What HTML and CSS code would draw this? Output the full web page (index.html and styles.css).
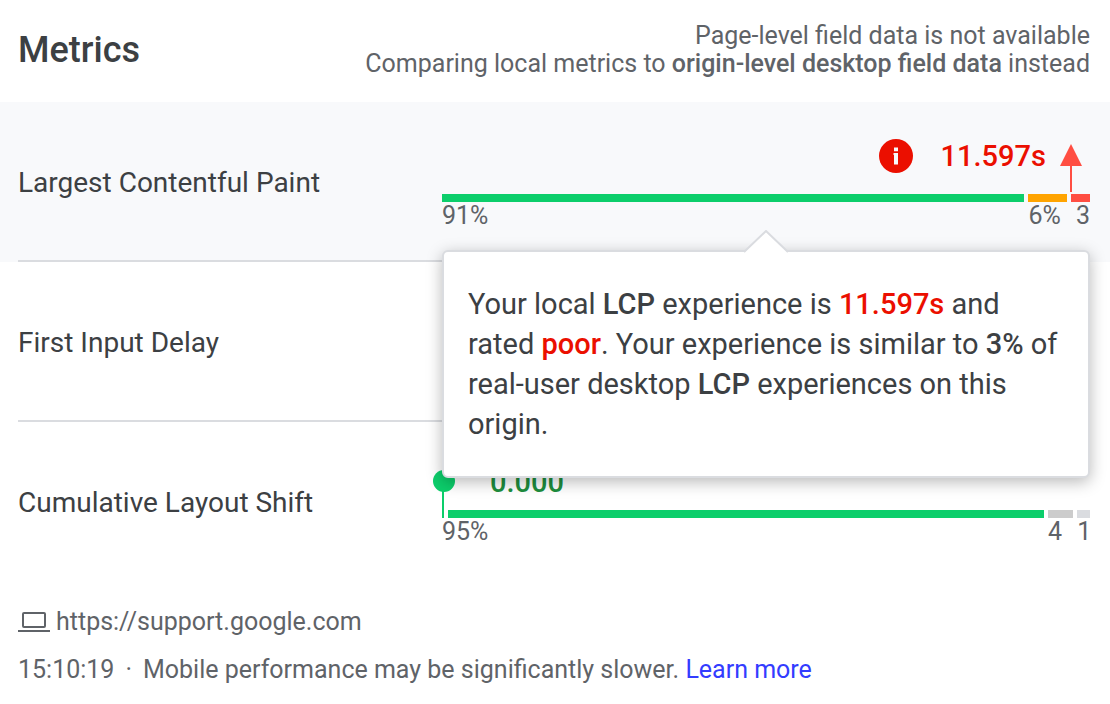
FILE: index.html
```html
<!DOCTYPE html>
<html lang="en">
<head>
<meta charset="utf-8">
<title>Metrics</title>
<link rel="stylesheet" href="styles.css">
</head>
<body>
<main class="panel">
  <header class="header">
    <h1 class="title">Metrics</h1>
    <p class="summary">Page-level field data is not available<br>Comparing local metrics to <strong>origin-level desktop field data</strong> instead</p>
  </header>

  <section class="metric active">
    <div class="row">
      <h2 class="name">Largest Contentful Paint</h2>
      <div class="chart">
        <div class="reading reading-end">
          <div class="value poor">
            <svg class="info" viewBox="0 0 34 34" aria-hidden="true">
              <circle cx="17" cy="17" r="17" fill="#eb0f00"/>
              <path d="M15 8.5h4v3.8h-4zM14.5 14H19v11.5h-4V16h-.5z" fill="#f8f9fb"/>
            </svg>
            <span>11.597s</span>
          </div>
          <svg class="marker" viewBox="0 0 22 48" aria-hidden="true">
            <path d="M10 20h2v28h-2zM11 0L22 22H0z" fill="#ff4e42"/>
          </svg>
        </div>
        <div class="bars">
          <div class="segment" style="flex-grow: 91"><i class="bar good"></i><span>91%</span></div>
          <div class="segment" style="flex-grow: 6"><i class="bar average"></i><span>6%</span></div>
          <div class="segment last" style="flex-grow: 3"><i class="bar bad"></i><span>3</span></div>
        </div>
        <div class="tooltip" role="tooltip">
          <svg class="tip" viewBox="0 0 46 24" aria-hidden="true">
            <path d="M0 24L23 1L46 24z" fill="#fff"/>
            <path d="M1 22L23 1L45 22" fill="none" stroke="#dadce0" stroke-width="2"/>
          </svg>
          <p class="message">Your local <strong>LCP</strong> experience is <strong class="poor">11.597s</strong> and rated <strong class="poor">poor</strong>. Your experience is similar to <strong>3%</strong> of real-user desktop <strong>LCP</strong> experiences on this origin.</p>
        </div>
      </div>
    </div>
  </section>

  <section class="metric">
    <div class="row">
      <h2 class="name">First Input Delay</h2>
    </div>
  </section>

  <section class="metric">
    <div class="row">
      <h2 class="name">Cumulative Layout Shift</h2>
      <div class="chart">
        <div class="reading reading-start">
          <svg class="marker" viewBox="0 0 22 48" aria-hidden="true">
            <path d="M9 20h2v28H9z" fill="#0cce6b"/>
            <circle cx="11" cy="11" r="11" fill="#0cce6b"/>
          </svg>
          <div class="value fine"><span>0.000</span></div>
        </div>
        <div class="bars offset">
          <div class="segment" style="flex-grow: 95"><i class="bar good"></i><span>95%</span></div>
          <div class="segment" style="flex-grow: 4"><i class="bar grey"></i><span>4</span></div>
          <div class="segment last" style="flex-grow: 2"><i class="bar light"></i><span>1</span></div>
        </div>
      </div>
    </div>
  </section>

  <footer class="footer">
    <p class="line">
      <svg class="laptop" viewBox="0 0 32 22" aria-hidden="true">
        <rect x="5" y="2" width="22" height="14" rx="1" fill="none" stroke="#5f6368" stroke-width="2"/>
        <path d="M0 19h32v2H0z" fill="#5f6368"/>
      </svg>
      <span>https://support.google.com</span>
    </p>
    <p class="line"><span>15:10:19</span><span class="dot">·</span><span>Mobile performance may be significantly slower. <a class="link" href="#">Learn more</a></span></p>
  </footer>
</main>
</body>
</html>
```
FILE: styles.css
```css
* {
  box-sizing: border-box;
}

body {
  margin: 0;
  background: #fff;
  color: #3c4043;
  font-family: Roboto, "Liberation Sans", sans-serif;
  font-size: 29px;
}

h1, h2, p {
  margin: 0;
}

strong {
  font-weight: 500;
}

.header {
  display: flex;
  justify-content: space-between;
  align-items: center;
  padding: 22px 20px 24px 18px;
}

.title {
  font-size: 36px;
  line-height: 52px;
  font-weight: 500;
}

.summary {
  color: #5f6368;
  font-size: 25px;
  line-height: 28px;
  text-align: right;
}

.metric {
  padding: 0 20px 0 18px;
}

.active {
  background: #f8f9fb;
}

.row {
  display: grid;
  grid-template-columns: 424px 1fr;
  align-items: center;
  min-height: 160px;
  padding-top: 2px;
  border-bottom: 2px solid #dadce0;
}

.metric:last-of-type .row {
  border-bottom-color: transparent;
}

.name {
  padding-top: 2px;
  font-size: 28px;
  line-height: 40px;
  font-weight: 400;
}

.chart {
  position: relative;
}

.reading {
  display: flex;
  align-items: flex-end;
}

.reading-end {
  justify-content: flex-end;
  gap: 14px;
  height: 60px;
  padding: 0 8px 2px 0;
}

.reading-start {
  gap: 35px;
  height: 52px;
}

.value {
  display: flex;
  align-items: center;
  gap: 28px;
  height: 44px;
  margin-bottom: 14px;
  font-weight: 500;
}

.reading-start .value {
  margin-bottom: 6px;
}

.poor {
  color: #eb0f00;
}

.fine {
  color: #1e8e3e;
}

.info {
  width: 34px;
  height: 34px;
}

.marker {
  width: 22px;
  height: 48px;
}

.reading-start .marker {
  margin: 0 0 -8px -9px;
}

.bars {
  display: flex;
  gap: 4px;
  color: #5f6368;
  font-size: 25px;
  line-height: 28px;
}

.segment {
  display: flex;
  flex-direction: column;
  flex-basis: 0;
  min-width: 0;
}

.last {
  text-align: right;
}

.bar {
  height: 8px;
}

.offset .segment:first-child .bar {
  margin-left: 6px;
}

.good {
  background: #0cce6b;
}

.average {
  background: #ffa400;
}

.bad {
  background: #ff4e42;
}

.grey {
  background: #ccc;
}

.light {
  background: #dadce0;
}

.tooltip {
  position: absolute;
  z-index: 1;
  top: 100%;
  left: 0;
  right: 0;
  margin-top: 20px;
  padding: 32px 28px 32px 24px;
  background: #fff;
  border: 2px solid #dadce0;
  border-radius: 6px;
  box-shadow: 0 4px 16px rgba(0, 0, 0, 0.28);
}

.tip {
  position: absolute;
  bottom: 100%;
  left: 50%;
  width: 46px;
  height: 24px;
  margin: 0 0 -2px -23px;
}

.message {
  line-height: 40px;
}

.footer {
  padding: 16px 20px 10px 18px;
  color: #5f6368;
  font-size: 25px;
  line-height: 48px;
}

.line {
  display: flex;
  align-items: center;
}

.laptop {
  width: 32px;
  height: 22px;
  margin-right: 6px;
}

.dot {
  margin: 0 11px;
}

.link {
  color: #333cff;
  text-decoration: none;
}
```
